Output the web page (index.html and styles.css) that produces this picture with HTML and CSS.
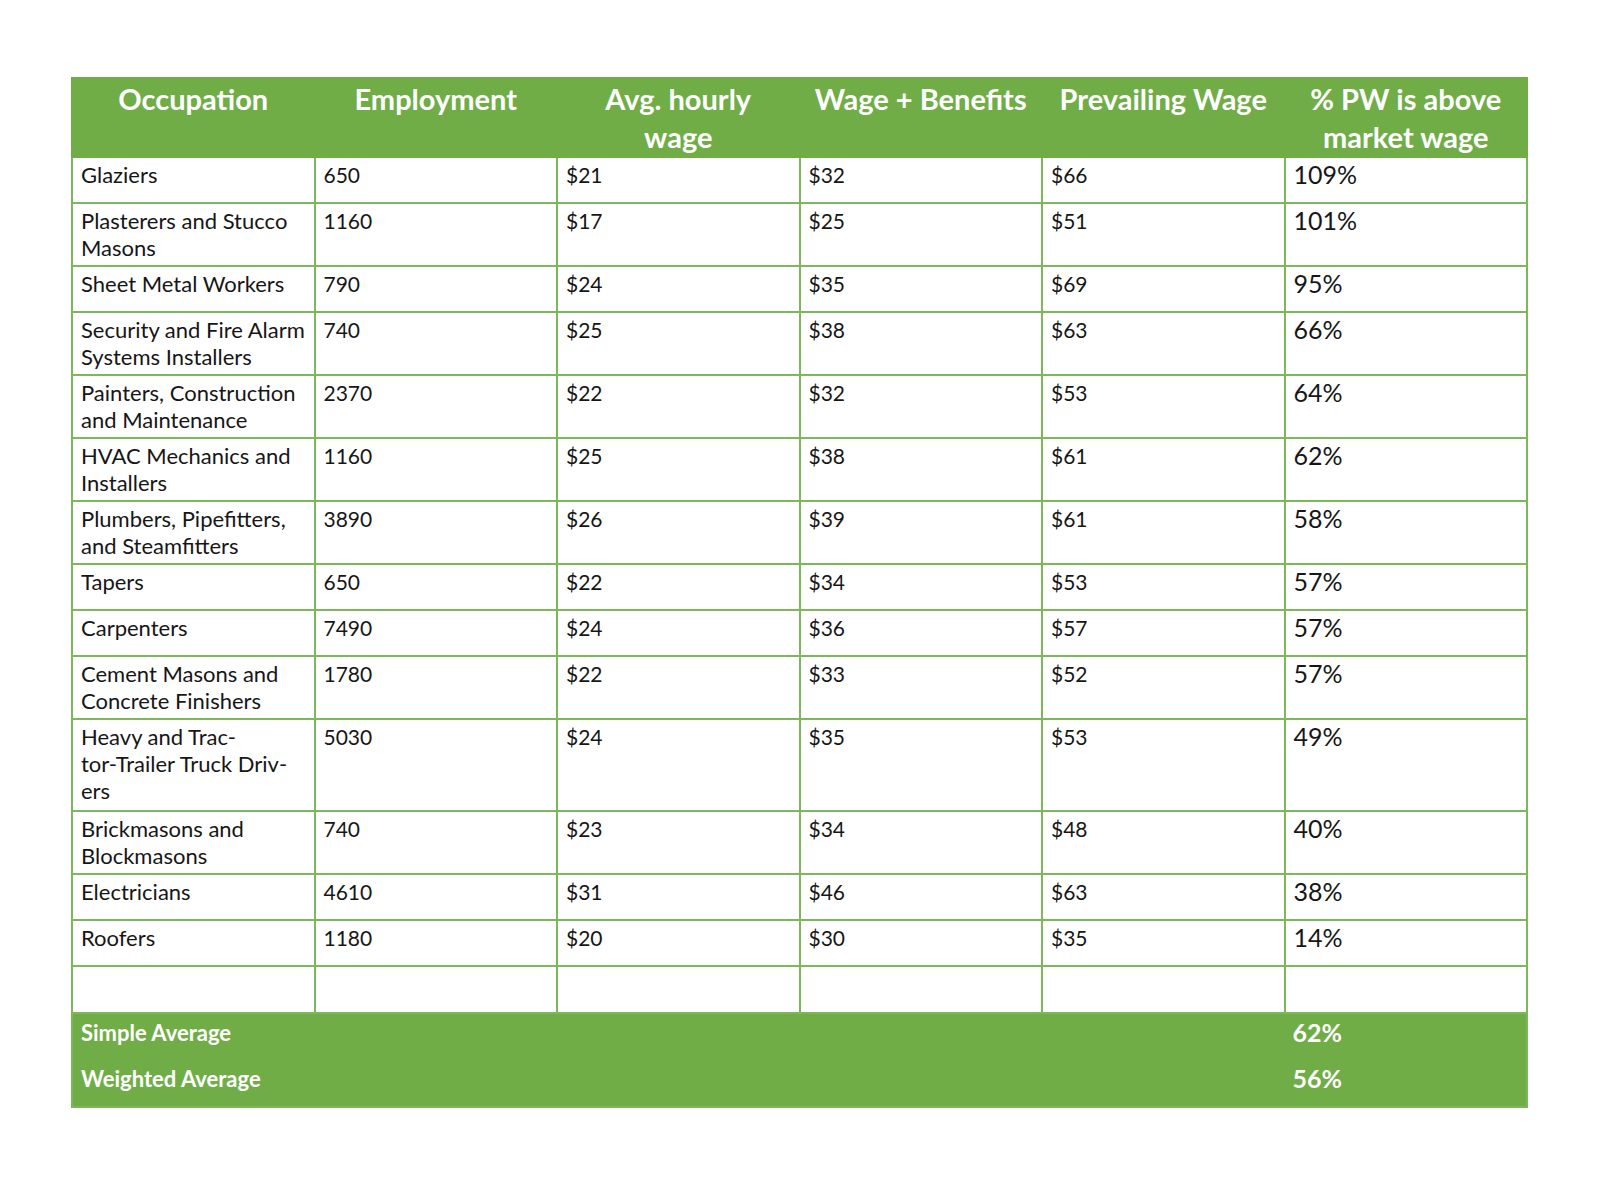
FILE: index.html
```html
<!DOCTYPE html>
<html lang="en">
<head>
<meta charset="utf-8">
<title>Prevailing Wage Comparison</title>
<link rel="stylesheet" href="styles.css">
</head>
<body>
<div class="page">
<table class="wage-table">
  <colgroup>
    <col><col><col><col><col><col>
  </colgroup>
  <thead>
    <tr>
      <th>Occupation</th>
      <th>Employment</th>
      <th>Avg. hourly<br>wage</th>
      <th>Wage + Benefits</th>
      <th>Prevailing Wage</th>
      <th>% PW is above<br>market wage</th>
    </tr>
  </thead>
  <tbody>
    <tr><td class="occ">Glaziers</td><td>650</td><td>$21</td><td>$32</td><td>$66</td><td class="pct">109%</td></tr>
    <tr><td class="occ">Plasterers and Stucco<br>Masons</td><td>1160</td><td>$17</td><td>$25</td><td>$51</td><td class="pct">101%</td></tr>
    <tr><td class="occ">Sheet Metal Workers</td><td>790</td><td>$24</td><td>$35</td><td>$69</td><td class="pct">95%</td></tr>
    <tr><td class="occ">Security and Fire Alarm<br>Systems Installers</td><td>740</td><td>$25</td><td>$38</td><td>$63</td><td class="pct">66%</td></tr>
    <tr><td class="occ">Painters, Construction<br>and Maintenance</td><td>2370</td><td>$22</td><td>$32</td><td>$53</td><td class="pct">64%</td></tr>
    <tr><td class="occ">HVAC Mechanics and<br>Installers</td><td>1160</td><td>$25</td><td>$38</td><td>$61</td><td class="pct">62%</td></tr>
    <tr><td class="occ">Plumbers, Pipefitters,<br>and Steamfitters</td><td>3890</td><td>$26</td><td>$39</td><td>$61</td><td class="pct">58%</td></tr>
    <tr><td class="occ">Tapers</td><td>650</td><td>$22</td><td>$34</td><td>$53</td><td class="pct">57%</td></tr>
    <tr><td class="occ">Carpenters</td><td>7490</td><td>$24</td><td>$36</td><td>$57</td><td class="pct">57%</td></tr>
    <tr><td class="occ">Cement Masons and<br>Concrete Finishers</td><td>1780</td><td>$22</td><td>$33</td><td>$52</td><td class="pct">57%</td></tr>
    <tr class="tall"><td class="occ">Heavy and Trac-<br>tor-Trailer Truck Driv-<br>ers</td><td>5030</td><td>$24</td><td>$35</td><td>$53</td><td class="pct">49%</td></tr>
    <tr><td class="occ">Brickmasons and<br>Blockmasons</td><td>740</td><td>$23</td><td>$34</td><td>$48</td><td class="pct">40%</td></tr>
    <tr><td class="occ">Electricians</td><td>4610</td><td>$31</td><td>$46</td><td>$63</td><td class="pct">38%</td></tr>
    <tr><td class="occ">Roofers</td><td>1180</td><td>$20</td><td>$30</td><td>$35</td><td class="pct">14%</td></tr>
    <tr class="empty"><td></td><td></td><td></td><td></td><td></td><td></td></tr>
  </tbody>
  <tfoot>
    <tr><td colspan="5" class="occ">Simple Average</td><td class="pct">62%</td></tr>
    <tr><td colspan="5" class="occ">Weighted Average</td><td class="pct">56%</td></tr>
  </tfoot>
</table>
</div>
</body>
</html>
```

FILE: styles.css
```css
html, body {
  margin: 0;
  padding: 0;
  background: #ffffff;
}

body {
  font-family: "Lato", "Open Sans", sans-serif;
  color: #161616;
}

.page {
  padding: 77px 0 0 71px;
}

.wage-table {
  width: 1457px;
  table-layout: fixed;
  border-collapse: collapse;
  border: 2px solid #7cb85a;
}

.wage-table col {
  width: 16.666%;
}

.wage-table th {
  background: #70ad47;
  color: #ffffff;
  font-weight: 700;
  font-size: 29px;
  line-height: 38px;
  text-align: center;
  vertical-align: top;
  padding: 1px 4px 0;
  height: 71px;
  white-space: nowrap;
  border: 2px solid #70ad47;
}

.wage-table td {
  font-size: 21px;
  line-height: 27px;
  padding: 3px 8px 4px;
  vertical-align: top;
  text-align: left;
  white-space: nowrap;
  border: 2px solid #7cb85a;
  height: 37px;
}

.wage-table td.occ {
  font-size: 22px;
}

.wage-table td.pct {
  font-size: 25px;
}

.wage-table tr.tall td {
  padding-bottom: 6px;
}

.wage-table tr.empty td {
  height: 38px;
}

.wage-table tfoot td {
  background: #70ad47;
  color: #ffffff;
  font-weight: 700;
  border: none;
  height: 38px;
  padding-top: 5px;
  padding-bottom: 3px;
}
```
